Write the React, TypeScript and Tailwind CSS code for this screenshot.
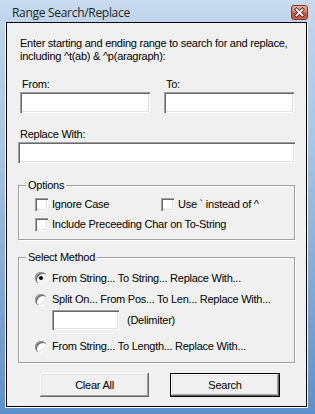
import React from "react";

const sunken =
  "bg-white shadow-[inset_1px_1px_0_#a0a0a0,inset_2px_2px_0_#696969,inset_-1px_-1px_0_#ffffff,inset_-2px_-2px_0_#e3e3e3]";

const raised =
  "shadow-[inset_-1px_-1px_0_#696969,inset_1px_1px_0_#ffffff,inset_-2px_-2px_0_#a0a0a0,inset_2px_2px_0_#e3e3e3]";

function Check({ label, className = "" }: { label: string; className?: string }) {
  return (
    <div className={`flex items-center gap-[4px] h-[20px] ${className}`}>
      <span className={`w-[13px] h-[13px] shrink-0 ${sunken}`} />
      <span className="leading-[13px] whitespace-nowrap">{label}</span>
    </div>
  );
}

function Radio({ label, on, className = "" }: { label: string; on?: boolean; className?: string }) {
  return (
    <div className={`flex items-center gap-[5px] ${className}`}>
      <span
        className={`w-[12px] h-[12px] rounded-full shrink-0 flex items-center justify-center ${sunken}`}
      >
        {on && <span className="w-[4px] h-[4px] rounded-full bg-black" />}
      </span>
      <span className="leading-[13px] whitespace-nowrap">{label}</span>
    </div>
  );
}

function Group({
  title,
  className = "",
  children,
}: {
  title: string;
  className?: string;
  children: React.ReactNode;
}) {
  return (
    <div
      className={`relative border border-[#a0a0a0] shadow-[inset_1px_1px_0_#ffffff,1px_1px_0_#ffffff] ${className}`}
    >
      <span className="absolute -top-[7px] left-[7px] px-[2px] bg-[#f0f0f0] leading-[13px]">
        {title}
      </span>
      {children}
    </div>
  );
}

function Field({ label, className = "" }: { label: string; className?: string }) {
  return (
    <div className={`flex flex-col ${className}`}>
      <span className="leading-[13px] h-[13px] mb-[1px] pl-[2px]">{label}</span>
      <div className={`h-[21px] ${sunken}`} />
    </div>
  );
}

export default function App() {
  return (
    <div className="w-[315px] h-[414px] flex flex-col bg-[linear-gradient(to_bottom,#c8dbef_0px,#bcd3ea_30px,#a9c6e6_140px,#5d90c8_100%)] font-['Liberation_Sans',Arial,sans-serif] text-[11px] tracking-[-0.25px] text-black">
      {/* title bar */}
      <div className="h-[22px] flex items-start justify-between pl-[12px] pr-[7px] shrink-0">
        <span className="mt-[6px] leading-[14px] text-[12px] tracking-[-0.3px] font-['Open_Sans','Noto_Sans',sans-serif] text-[#1e1e1e]">
          Range Search/Replace
        </span>
        <div className="mt-[5px] w-[17px] h-[15px] rounded-[3px] border border-[#7a3528] bg-[linear-gradient(to_bottom,#eab0a2_0%,#d9806c_45%,#c6513a_55%,#d0674c_100%)] flex items-center justify-center">
          <svg width="15" height="13" viewBox="0 0 15 13">
            <path d="M4.5 3.5 L10.5 9.5 M10.5 3.5 L4.5 9.5" stroke="#5a1e14" strokeWidth="3.4" strokeLinecap="square" />
            <path d="M4.5 3.5 L10.5 9.5 M10.5 3.5 L4.5 9.5" stroke="#ffffff" strokeWidth="1.8" strokeLinecap="square" />
          </svg>
        </div>
      </div>

      {/* client area */}
      <div className="flex-1 flex flex-col pl-[5px] pr-[7px] pb-[6px]">
        <div className="flex-1 flex flex-col border-l border-r border-b border-white">
          <div className="flex-1 flex flex-col border border-black bg-[#f0f0f0] pt-[14px] px-[11px]">
            <p className="leading-[13px] ml-[2px] whitespace-nowrap">
              Enter starting and ending range to search for and replace,
              <br />
              including ^t(ab) &amp; ^p(aragraph):
            </p>

            <div className="flex mt-[15px] pl-[2px] gap-[14px]">
              <Field label="From:" className="w-[130px]" />
              <Field label="To:" className="w-[130px]" />
            </div>

            <Field label="Replace With:" className="mt-[15px]" />

            <Group title="Options" className="mt-[22px] pt-[8px] pb-[5px] pl-[16px]">
              <div className="flex">
                <Check label="Ignore Case" className="w-[126px]" />
                <Check label="Use ` instead of ^" />
              </div>
              <Check label="Include Preceeding Char on To-String" />
            </Group>

            <Group title="Select Method" className="mt-[17px] pt-[9px] pb-[5px] pl-[16px]">
              <Radio label="From String... To String... Replace With..." on className="h-[22px]" />
              <Radio label="Split On... From Pos... To Len... Replace With..." className="h-[21px]" />
              <div className="flex items-center h-[20px] pl-[17px] gap-[8px]">
                <div className={`w-[67px] h-[20px] ${sunken}`} />
                <span className="leading-[13px]">(Delimiter)</span>
              </div>
              <Radio label="From String... To Length... Replace With..." className="h-[21px] mt-[6px]" />
            </Group>

            <div className="flex mt-[10px] pl-[22px] gap-[21px]">
              <button className={`w-[109px] h-[24px] bg-[#f0f0f0] leading-[13px] ${raised}`}>
                Clear All
              </button>
              <button className="w-[110px] h-[24px] border border-black bg-[#f0f0f0] flex">
                <span className={`flex-1 flex items-center justify-center leading-[13px] ${raised}`}>
                  Search
                </span>
              </button>
            </div>
          </div>
        </div>
      </div>
    </div>
  );
}
